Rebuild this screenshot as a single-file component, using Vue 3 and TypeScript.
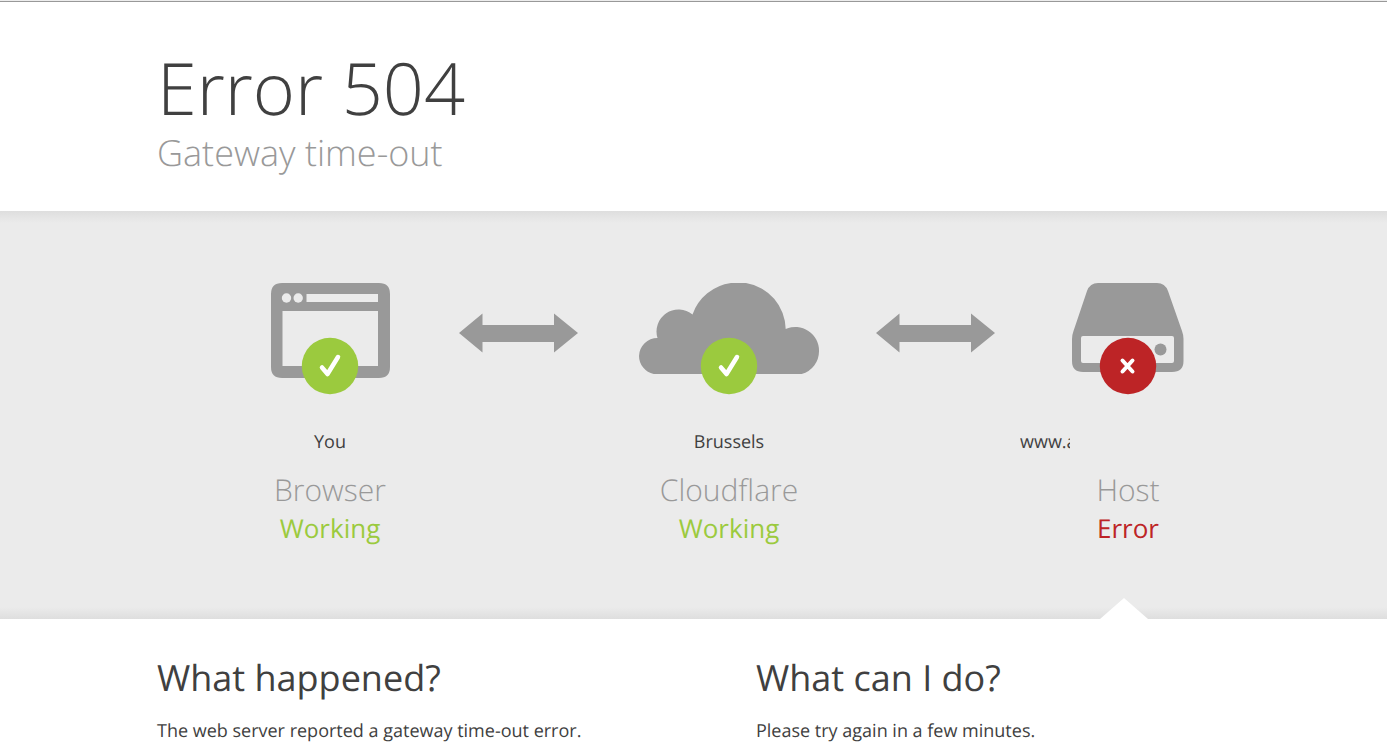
<script setup lang="ts">
type Kind = 'browser' | 'cloud' | 'server'

interface Stage {
  kind: Kind
  place: string
  clipped: boolean
  name: string
  status: string
  ok: boolean
}

const stages: Stage[] = [
  { kind: 'browser', place: 'You', clipped: false, name: 'Browser', status: 'Working', ok: true },
  { kind: 'cloud', place: 'Brussels', clipped: false, name: 'Cloudflare', status: 'Working', ok: true },
  { kind: 'server', place: 'www.a', clipped: true, name: 'Host', status: 'Error', ok: false },
]

const sections = [
  { title: 'What happened?', text: 'The web server reported a gateway time-out error.' },
  { title: 'What can I do?', text: 'Please try again in a few minutes.' },
]
</script>

<template>
  <div class="page">
    <header class="header">
      <h1 class="title">Error 504</h1>
      <p class="subtitle">Gateway time-out</p>
    </header>

    <section class="band" aria-label="Connection status">
      <div class="stages">
        <template v-for="(stage, i) in stages" :key="stage.kind">
          <svg v-if="i > 0" class="arrow" width="120" height="40" viewBox="0 0 120 40" aria-hidden="true">
            <path d="M0 20 23.500 0.500V12H95V0.500L119 20 95 39.500V29H23.500V39.500Z" fill="#999" />
          </svg>
          <div class="stage">
            <div class="picture">
              <svg v-if="stage.kind === 'browser'" width="120" height="96" viewBox="-1 0 120 96" aria-hidden="true">
                <path fill="#999" fill-rule="evenodd" d="M11 0H108Q119 0 119 11V84Q119 95 108 95H11Q0 95 0 84V11Q0 0 11 0ZM11.500 28V83H107V28ZM35.500 11V19H107V11Z" />
                <circle cx="15.500" cy="15" r="4.700" fill="#ebebeb" />
                <circle cx="27.200" cy="15" r="4.700" fill="#ebebeb" />
              </svg>
              <svg v-else-if="stage.kind === 'cloud'" width="180" height="92" viewBox="0 0 180 92" aria-hidden="true">
                <path fill="#999" d="M14.700 91A18.500 18.500 0 0 1 0 73A18.500 18.500 0 0 1 18.500 55A22 22 0 0 1 53.500 31.500A47.500 47.500 0 0 1 92 0H107A47.500 47.500 0 0 1 146.700 46A23.700 23.700 0 0 1 180 68A23.700 23.700 0 0 1 162.700 91Z" />
              </svg>
              <svg v-else width="112" height="90" viewBox="0 0 112 90" aria-hidden="true">
                <path fill="#999" fill-rule="evenodd" d="M26 0H85Q93 0 96 8L110 48Q111.500 52 111.500 56V78Q111.500 89 100 89H11Q0 89 0 78V56Q0 52 1.500 48L15 8Q18 0 26 0ZM11 53Q9 53 9 55V78Q9 80 11 80H100Q102 80 102 78V55Q102 53 100 53Z" />
                <circle cx="88.500" cy="66.500" r="6" fill="#999" />
              </svg>
              <svg class="badge" width="58" height="58" viewBox="0 0 58 58" aria-hidden="true">
                <circle cx="29" cy="29" r="28.200" :fill="stage.ok ? '#9bca3e' : '#bd2426'" />
                <path v-if="stage.ok" d="M21 30.500 26.500 37 37 20" fill="none" stroke="#fff" stroke-width="4.500" stroke-linecap="round" stroke-linejoin="round" />
                <path v-else d="M23.500 23.500 33.500 34.500M33.500 23.500 23.500 34.500" fill="none" stroke="#fff" stroke-width="4" stroke-linecap="round" />
              </svg>
            </div>
            <p class="place" :class="{ domain: stage.clipped }"><span>{{ stage.place }}</span></p>
            <h2 class="name">{{ stage.name }}</h2>
            <p class="status" :class="stage.ok ? 'ok' : 'bad'">{{ stage.status }}</p>
            <span v-if="!stage.ok" class="notch"></span>
          </div>
        </template>
      </div>
    </section>

    <main class="details">
      <section v-for="s in sections" :key="s.title">
        <h2 class="heading">{{ s.title }}</h2>
        <p class="text">{{ s.text }}</p>
      </section>
    </main>
  </div>
</template>

<style>
html,
body {
  margin: 0;
  background: #fff;
  overflow: hidden;
}
</style>

<style scoped>
.page {
  border-top: 1px solid #ededed;
  color: #404040;
  font-family: "Open Sans", "Noto Sans", sans-serif;
  font-size: 18px;
  text-rendering: geometricPrecision;
}
h1,
h2,
p {
  margin: 0;
}
.header {
  border-top: 1px solid #999;
  padding: 46px 59px 33px 157px;
}
.title {
  font-size: 72px;
  line-height: 80px;
  font-weight: 300;
}
.subtitle {
  font-size: 36px;
  line-height: 50px;
  font-weight: 300;
  color: #999;
}
.band {
  background:
    linear-gradient(#dedede, #ebebeb) top / 100% 12px no-repeat,
    linear-gradient(#ebebeb, #dedede) bottom / 100% 12px no-repeat,
    #ebebeb;
}
.stages {
  display: grid;
  grid-template-columns: 258fr 120fr 300fr minmax(0, 114fr) 270fr;
  padding: 72px 124px 0 201px;
}
.arrow {
  margin-top: 30px;
  justify-self: center;
}
.stage {
  position: relative;
  display: flex;
  flex-direction: column;
  align-items: center;
  padding-bottom: 72px;
}
.picture {
  position: relative;
  display: flex;
  justify-content: center;
  height: 142px;
}
.badge {
  position: absolute;
  top: 54px;
  left: 50%;
  transform: translateX(-50%);
}
.place {
  line-height: 34px;
}
.domain {
  display: flex;
  width: 216px;
}
.domain span {
  width: 50px;
  overflow: hidden;
  white-space: nowrap;
}
.name {
  margin-top: 11px;
  font-size: 30px;
  line-height: 40px;
  font-weight: 300;
  color: #999;
}
.status {
  font-size: 26px;
  line-height: 37px;
}
.ok {
  color: #9bca3e;
}
.bad {
  color: #bd2426;
}
.notch {
  position: absolute;
  bottom: 0;
  left: 50%;
  width: 48px;
  height: 21px;
  margin-left: -28px;
  background: #fff;
  clip-path: polygon(50% 0, 100% 100%, 0 100%);
}
.details {
  display: grid;
  grid-template-columns: 1fr 1fr;
  padding: 34px 32px 32px 157px;
}
.heading {
  font-size: 36px;
  line-height: 50px;
  font-weight: 400;
}
.text {
  margin-top: 14px;
  line-height: 28px;
}
</style>
